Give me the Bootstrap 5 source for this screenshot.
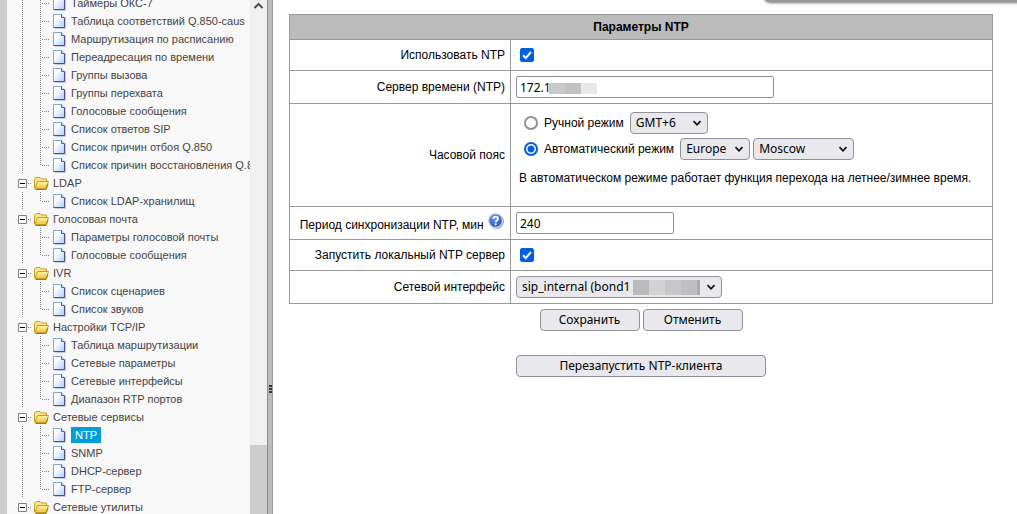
<!DOCTYPE html>
<html lang="ru">
<head>
<meta charset="utf-8">
<meta name="viewport" content="width=device-width, initial-scale=1">
<title>Параметры NTP</title>
<link rel="stylesheet" href="https://cdn.jsdelivr.net/npm/bootstrap@5.3.0/dist/css/bootstrap.min.css">
<style>
body{font-family:"Liberation Sans",Arial,sans-serif;font-size:12px;line-height:16px;color:#000;background:#fff}
.side-pane{width:260px;background:#f8f8f8;flex:none}
.edge{width:7px;background:#ccc;flex:none}
.tree-box{min-width:0}
.tree{margin-top:-6px;padding-left:6px;font-size:11px}
.tree ul{padding:0;margin:0;list-style:none}
.node{height:18px;display:flex;align-items:center;white-space:nowrap}
.node svg{flex:none;width:18px;height:18px}
.node a{color:#444;text-decoration:none;margin-left:4px;line-height:16px}
.node a.current{background:#009fda;color:#fff;padding:0 4px}
.scroll-track{width:17px;background:#f0f0f0;flex:none}
.scroll-thumb{height:69px;background:#cdcdcd}
.splitter{width:6px;background:#bbb;border-left:1px solid #8c8c8c;border-right:1px solid #999;flex:none}
.splitter::before{content:"";flex:76}
.splitter::after{content:"";flex:24}
.grip{width:3px;height:8px;background:repeating-linear-gradient(#333 0 2px,transparent 2px 3px)}
.content-pane{padding:14px 24px 0 16px;min-width:0}
.popup-edge{top:-16px;right:-8px;width:262px;height:18px;background:#999;border-radius:8px;box-shadow:0 1px 3px #777}
.params{width:100%;border-collapse:collapse}
.params th,.params td{border:1px solid #999;padding:5px}
.params thead th{background:#bbb;text-align:center;height:25px;padding:0}
.params tbody th{width:221px;text-align:right;font-weight:400;white-space:nowrap}
.row-s{height:31px}.row-m{height:33px}.row-l{height:103px}
.help{vertical-align:baseline}
.ctl{font-family:"Noto Sans",sans-serif;font-size:12px;line-height:20px;height:22px;border:1px solid #8f8f9d;color:#000;display:block}
input.ctl{border-radius:2px;padding:0 3px;background:#fff}
select.ctl,button.ctl{background-color:#e9e9ed;border-radius:4px}
select.ctl{appearance:none;padding:0 18px 0 5px;background-repeat:no-repeat;background-position:right 5px center;background-image:url("data:image/svg+xml,%3Csvg xmlns='http://www.w3.org/2000/svg' width='10' height='10'%3E%3Cpath d='M1.5 3.2 5 6.8 8.5 3.2' fill='none' stroke='%23111' stroke-width='1.7'/%3E%3C/svg%3E")}
button.ctl{padding:0}
.w-btn{width:100px}.w-restart{width:250px}.w-server{width:258px}.w-period{width:158px}
.w-gmt{width:78px}.w-region{width:70px}.w-city{width:101px}.w-iface{width:206px}
.form-check-input.tick{width:14px;height:14px;margin:0 0 0 4px;border:1px solid #8f8f9d;border-radius:2px;float:none;display:block}
.form-check-input.tick:checked{background-color:#0060df;border-color:#0060df;background-size:14px;background-image:url("data:image/svg+xml,%3Csvg xmlns='http://www.w3.org/2000/svg' viewBox='0 0 14 14'%3E%3Cpath d='M3 7.3 5.8 10 11 4' fill='none' stroke='white' stroke-width='2'/%3E%3C/svg%3E")}
.form-check-input.dot{width:14px;height:14px;margin:0 3px 0 0;border:2px solid #8f8f9d;flex:none}
.form-check-input.dot:checked{border-color:#0060df;background-color:#fff;background-image:radial-gradient(circle,#0060df 3px,#fff 4px)}
.mode-line{height:26px;padding-left:8px;gap:3px}
.mode-line label{margin-right:3px}
.note{padding-left:3px;margin:8px 0 14px}
.buttons{gap:3px;margin-top:5px}
.mosaic{display:flex;pointer-events:none}
.mosaic i{width:16px;height:100%}
.mosaic.on-input{left:33px;top:7px;height:11px}
.mosaic.on-select{left:117px;top:4px;height:15px}
.c1{background:#c9c9c9}.c2{background:#c2c2c2}.c3{background:#e8e8e8}.c4{background:#bababd}.c5{background:#d2d2d4}.c6{background:#c7c7ca}.c7{background:#bfbfc3}
.mosaic i.c8{width:3px;background:#aaa}
</style>
</head>
<body class="vh-100 overflow-hidden">
<svg width="0" height="0" class="position-absolute" aria-hidden="true">
<defs>
<linearGradient id="paper" x1="0" y1="0" x2="1" y2="1"><stop offset=".3" stop-color="#fff"/><stop offset="1" stop-color="#a9ccfb"/></linearGradient>
<linearGradient id="gold" x1="0" y1="0" x2="0" y2="1"><stop offset="0" stop-color="#fff5a8"/><stop offset="1" stop-color="#f0c43a"/></linearGradient>
<radialGradient id="ball" cx=".4" cy=".3" r=".8"><stop offset="0" stop-color="#6e9df5"/><stop offset="1" stop-color="#1b49b5"/></radialGradient>
</defs>
<symbol id="bar" viewBox="0 0 18 18"><path d="M9.500 0V18" stroke="#808080" stroke-dasharray="1 1"/></symbol>
<symbol id="tee" viewBox="0 0 18 18"><path d="M9.500 0V18M11 9.500H18" stroke="#808080" stroke-dasharray="1 1"/></symbol>
<symbol id="end" viewBox="0 0 18 18"><path d="M9.500 0V10M11 9.500H18" stroke="#808080" stroke-dasharray="1 1"/></symbol>
<symbol id="minus" viewBox="0 0 18 18"><path d="M5.500 5.500h8v8h-8z" fill="#fff" stroke="#808080"/><path d="M7 9.500h5" stroke="#000"/><path d="M15 9.500h3" stroke="#808080" stroke-dasharray="1 1"/></symbol>
<symbol id="dir" viewBox="0 0 18 18"><path d="M3.500 14V5.500L5 3.500h4L10.500 5h5V7.500" fill="#fbe58a" stroke="#c79d1c"/><path d="M4 14.500 6.500 7.500h11L15 14.500H4z" fill="url(#gold)" stroke="#c79d1c"/><path d="M4.500 15.500H15l2-5" fill="none" stroke="#7d5c05" stroke-width=".8"/></symbol>
<symbol id="doc" viewBox="0 1 18 18"><path d="M6 17.500h10.500V6" fill="none" stroke="#c9c9de"/><path d="M4.500 3.500h8l3 3v10h-11z" fill="url(#paper)" stroke="#7da4e0"/><path d="M12.500 3.500v3h3" fill="#dbe9ff" stroke="#3d62b0"/><path d="M4.500 16.500h11V7" fill="none" stroke="#4a4c96"/></symbol>
</svg>
<div class="d-flex h-100">
<div class="edge"></div>
<nav class="side-pane d-flex h-100" aria-label="Меню">
<div class="tree-box flex-grow-1 overflow-hidden">
<div class="tree"><ul>
<li class="node"><svg><use href="#bar"/></svg><svg><use href="#tee"/></svg><svg><use href="#doc"/></svg><a href="#">Таймеры ОКС-7</a></li>
<li class="node"><svg><use href="#bar"/></svg><svg><use href="#tee"/></svg><svg><use href="#doc"/></svg><a href="#">Таблица соответствий Q.850-caus</a></li>
<li class="node"><svg><use href="#bar"/></svg><svg><use href="#tee"/></svg><svg><use href="#doc"/></svg><a href="#">Маршрутизация по расписанию</a></li>
<li class="node"><svg><use href="#bar"/></svg><svg><use href="#tee"/></svg><svg><use href="#doc"/></svg><a href="#">Переадресация по времени</a></li>
<li class="node"><svg><use href="#bar"/></svg><svg><use href="#tee"/></svg><svg><use href="#doc"/></svg><a href="#">Группы вызова</a></li>
<li class="node"><svg><use href="#bar"/></svg><svg><use href="#tee"/></svg><svg><use href="#doc"/></svg><a href="#">Группы перехвата</a></li>
<li class="node"><svg><use href="#bar"/></svg><svg><use href="#tee"/></svg><svg><use href="#doc"/></svg><a href="#">Голосовые сообщения</a></li>
<li class="node"><svg><use href="#bar"/></svg><svg><use href="#tee"/></svg><svg><use href="#doc"/></svg><a href="#">Список ответов SIP</a></li>
<li class="node"><svg><use href="#bar"/></svg><svg><use href="#tee"/></svg><svg><use href="#doc"/></svg><a href="#">Список причин отбоя Q.850</a></li>
<li class="node"><svg><use href="#bar"/></svg><svg><use href="#end"/></svg><svg><use href="#doc"/></svg><a href="#">Список причин восстановления Q.850</a></li>
<li class="node"><svg><use href="#minus"/></svg><svg><use href="#dir"/></svg><a href="#">LDAP</a></li>
<li class="node"><svg><use href="#bar"/></svg><svg><use href="#end"/></svg><svg><use href="#doc"/></svg><a href="#">Список LDAP-хранилищ</a></li>
<li class="node"><svg><use href="#minus"/></svg><svg><use href="#dir"/></svg><a href="#">Голосовая почта</a></li>
<li class="node"><svg><use href="#bar"/></svg><svg><use href="#tee"/></svg><svg><use href="#doc"/></svg><a href="#">Параметры голосовой почты</a></li>
<li class="node"><svg><use href="#bar"/></svg><svg><use href="#end"/></svg><svg><use href="#doc"/></svg><a href="#">Голосовые сообщения</a></li>
<li class="node"><svg><use href="#minus"/></svg><svg><use href="#dir"/></svg><a href="#">IVR</a></li>
<li class="node"><svg><use href="#bar"/></svg><svg><use href="#tee"/></svg><svg><use href="#doc"/></svg><a href="#">Список сценариев</a></li>
<li class="node"><svg><use href="#bar"/></svg><svg><use href="#end"/></svg><svg><use href="#doc"/></svg><a href="#">Список звуков</a></li>
<li class="node"><svg><use href="#minus"/></svg><svg><use href="#dir"/></svg><a href="#">Настройки TCP/IP</a></li>
<li class="node"><svg><use href="#bar"/></svg><svg><use href="#tee"/></svg><svg><use href="#doc"/></svg><a href="#">Таблица маршрутизации</a></li>
<li class="node"><svg><use href="#bar"/></svg><svg><use href="#tee"/></svg><svg><use href="#doc"/></svg><a href="#">Сетевые параметры</a></li>
<li class="node"><svg><use href="#bar"/></svg><svg><use href="#tee"/></svg><svg><use href="#doc"/></svg><a href="#">Сетевые интерфейсы</a></li>
<li class="node"><svg><use href="#bar"/></svg><svg><use href="#end"/></svg><svg><use href="#doc"/></svg><a href="#">Диапазон RTP портов</a></li>
<li class="node"><svg><use href="#minus"/></svg><svg><use href="#dir"/></svg><a href="#">Сетевые сервисы</a></li>
<li class="node"><svg><use href="#bar"/></svg><svg><use href="#tee"/></svg><svg><use href="#doc"/></svg><a href="#" class="current" aria-current="page">NTP</a></li>
<li class="node"><svg><use href="#bar"/></svg><svg><use href="#tee"/></svg><svg><use href="#doc"/></svg><a href="#">SNMP</a></li>
<li class="node"><svg><use href="#bar"/></svg><svg><use href="#tee"/></svg><svg><use href="#doc"/></svg><a href="#">DHCP-сервер</a></li>
<li class="node"><svg><use href="#bar"/></svg><svg><use href="#end"/></svg><svg><use href="#doc"/></svg><a href="#">FTP-сервер</a></li>
<li class="node"><svg><use href="#minus"/></svg><svg><use href="#dir"/></svg><a href="#">Сетевые утилиты</a></li>
</ul></div>
</div>
<div class="scroll-track d-flex flex-column justify-content-between">
<svg width="17" height="14" viewBox="0 0 17 14"><path d="M4.500 8 8.500 4l4 4" fill="none" stroke="#505050" stroke-width="2"/></svg>
<div class="scroll-thumb"></div>
</div>
</nav>
<div class="splitter d-flex flex-column align-items-center"><div class="grip"></div></div>
<main class="content-pane flex-grow-1 position-relative">
<div class="popup-edge position-absolute"></div>
<form>
<table class="params">
<thead><tr><th colspan="2" scope="colgroup">Параметры NTP</th></tr></thead>
<tbody>
<tr class="row-s"><th scope="row"><label for="use">Использовать NTP</label></th><td><input class="form-check-input tick" type="checkbox" id="use" checked></td></tr>
<tr class="row-m"><th scope="row"><label for="server">Сервер времени (NTP)</label></th><td><div class="position-relative"><input class="ctl w-server" id="server" type="text" value="172.1"><span class="mosaic on-input position-absolute"><i class="c1"></i><i class="c2"></i><i class="c3"></i></span></div></td></tr>
<tr class="row-l"><th scope="row">Часовой пояс</th><td>
<div class="mode-line d-flex align-items-center"><input class="form-check-input dot" type="radio" name="mode" id="manual"><label for="manual">Ручной режим</label><select class="ctl w-gmt" aria-label="Смещение"><option>GMT+6</option></select></div>
<div class="mode-line d-flex align-items-center"><input class="form-check-input dot" type="radio" name="mode" id="auto" checked><label for="auto">Автоматический режим</label><select class="ctl w-region" aria-label="Регион"><option>Europe</option></select><select class="ctl w-city" aria-label="Город"><option>Moscow</option></select></div>
<p class="note">В автоматическом режиме работает функция перехода на летнее/зимнее время.</p></td></tr>
<tr class="row-m"><th scope="row"><label for="period">Период синхронизации NTP, мин</label>
<svg class="help" width="18" height="16" viewBox="0 0 18 16" role="img" aria-label="Справка"><circle cx="9.500" cy="8.500" r="7.500" fill="#aaa"/><circle cx="8.500" cy="7.500" r="7.500" fill="#d8d8dc"/><circle cx="8.500" cy="7.500" r="6.300" fill="url(#ball)"/><path d="M6.300 5.800C6.300 2.800 11 3 11 5.700 11 7.500 8.700 7.500 8.700 9.300M8.700 10.300v2" fill="none" stroke="#fff" stroke-width="1.800"/></svg></th><td><input class="ctl w-period" id="period" type="text" value="240"></td></tr>
<tr class="row-s"><th scope="row"><label for="local">Запустить локальный NTP сервер</label></th><td><input class="form-check-input tick" type="checkbox" id="local" checked></td></tr>
<tr class="row-m"><th scope="row"><label for="iface">Сетевой интерфейс</label></th><td><div class="position-relative"><select class="ctl w-iface" id="iface"><option>sip_internal (bond1</option></select><span class="mosaic on-select position-absolute"><i class="c4"></i><i class="c5"></i><i class="c6"></i><i class="c7"></i><i class="c8"></i></span></div></td></tr>
</tbody></table>
<div class="d-flex justify-content-center buttons"><button type="button" class="ctl w-btn">Сохранить</button><button type="button" class="ctl w-btn">Отменить</button></div>
<button type="button" class="ctl w-restart mx-auto mt-4">Перезапустить NTP-клиента</button>
</form>
</main>
</div>
<script src="https://cdn.jsdelivr.net/npm/bootstrap@5.3.0/dist/js/bootstrap.bundle.min.js"></script>
</body>
</html>
